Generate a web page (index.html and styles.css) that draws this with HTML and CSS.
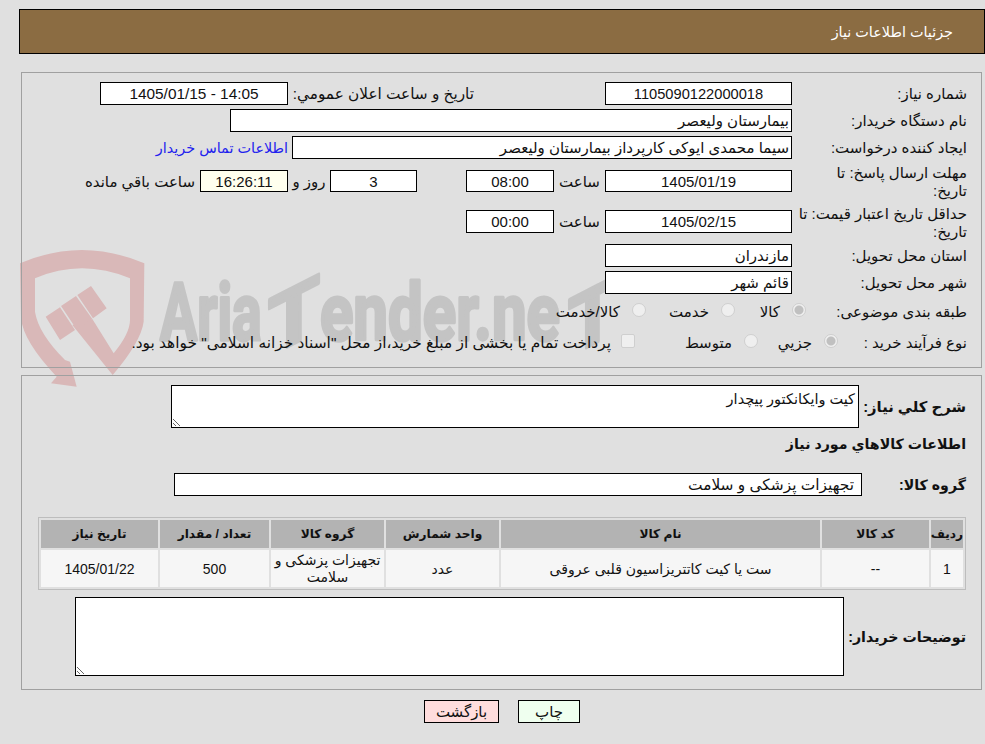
FILE: index.html
```html
<!DOCTYPE html>
<html lang="fa" dir="rtl">
<head>
<meta charset="utf-8">
<title>جزئیات اطلاعات نیاز</title>
<link rel="stylesheet" href="styles.css">
</head>
<body>
<svg class="watermark" viewBox="0 0 1860 450" width="620" height="150" aria-hidden="true">
  <path class="shield" d="M15,55 Q200,-25 388,55 L386,230 Q378,290 293,390 L172,240 L232,222 L296,325 Q345,265 345,225 L345,100 Q200,40 60,100 L60,200 Q70,265 150,345 L165,350 L185,425 L108,415 L125,395 Q25,290 18,220 Z"/>
  <path class="shield" d="M92,215 L135,187 L180,255 L135,285 Z M138,183 L183,153 L232,222 L184,252 Z M187,150 L228,123 L275,190 L234,220 Z"/>
  <text class="mark" x="435" y="285" textLength="305" lengthAdjust="spacingAndGlyphs">Aria</text>
  <text class="mark" transform="translate(759 336) skewY(-27)" x="0" y="0" textLength="156" lengthAdjust="spacingAndGlyphs">T</text>
  <text class="mark" x="915" y="285" textLength="720" lengthAdjust="spacingAndGlyphs">ender.ne</text>
  <text class="mark" transform="translate(1659 336) skewY(-27)" x="0" y="0" textLength="147" lengthAdjust="spacingAndGlyphs">T</text>
</svg>

<header class="title-bar">جزئیات اطلاعات نیاز</header>

<section class="panel panel-info">
  <div class="row">
    <label class="lbl">شماره نیاز:</label>
    <input class="fld fld-main ctr serial" readonly value="1105090122000018">
    <span class="announce">تاریخ و ساعت اعلان عمومي:</span>
    <input class="fld w188 ctr stamp" readonly value="1405/01/15 - 14:05" dir="ltr">
  </div>
  <div class="row">
    <label class="lbl">نام دستگاه خریدار:</label>
    <input class="fld w562" readonly value="بیمارستان ولیعصر">
  </div>
  <div class="row">
    <label class="lbl">ایجاد کننده درخواست:</label>
    <input class="fld w500" readonly value="سیما محمدی ایوکی کارپرداز بیمارستان ولیعصر">
    <a class="contact" href="#">اطلاعات تماس خریدار</a>
  </div>
  <div class="row row-deadline">
    <label class="lbl lbl-two">مهلت ارسال پاسخ: تا<br>تاریخ:</label>
    <input class="fld fld-main short ctr" readonly value="1405/01/19">
    <span class="unit w51">ساعت</span>
    <input class="fld w88 short ctr" readonly value="08:00">
    <span class="spacer"></span>
    <input class="fld w87 short ctr" readonly value="3">
    <span class="unit w42">روز و</span>
    <input class="fld w88 short ctr ivory" readonly value="16:26:11">
    <span class="remain">ساعت باقي مانده</span>
  </div>
  <div class="row row-validity">
    <label class="lbl lbl-two">حداقل تاریخ اعتبار قیمت: تا<br>تاریخ:</label>
    <input class="fld fld-main ctr" readonly value="1405/02/15">
    <span class="unit w51">ساعت</span>
    <input class="fld w88 ctr" readonly value="00:00">
  </div>
  <div class="row">
    <label class="lbl">استان محل تحویل:</label>
    <input class="fld fld-main" readonly value="مازندران">
  </div>
  <div class="row">
    <label class="lbl">شهر محل تحویل:</label>
    <input class="fld fld-main" readonly value="قائم شهر">
  </div>
  <div class="row row-options">
    <label class="lbl-cat">طبقه بندی موضوعی:</label>
    <span class="opt w71"><input class="radio" type="radio" disabled checked><span>کالا</span></span>
    <span class="opt w89"><input class="radio" type="radio" disabled><span>خدمت</span></span>
    <span class="opt"><input class="radio" type="radio" disabled><span>کالا/خدمت</span></span>
  </div>
  <div class="row row-process">
    <label class="lbl-proc">نوع فرآیند خرید :</label>
    <span class="opt w80"><input class="radio" type="radio" disabled checked><span>جزیي</span></span>
    <span class="opt w123"><input class="radio" type="radio" disabled><span>متوسط</span></span>
    <span class="opt opt-check"><input class="check" type="checkbox" disabled><span class="treasury">پرداخت تمام یا بخشی از مبلغ خرید،از محل "اسناد خزانه اسلامی" خواهد بود.</span></span>
  </div>
</section>

<section class="panel panel-goods">
  <div class="row-area">
    <label class="lbl-bold lbl-summary">شرح کلي نیاز:</label>
    <textarea class="area area-sm" readonly>کیت وایکانکتور پیچدار</textarea>
  </div>
  <h2 class="goods-title">اطلاعات کالاهاي مورد نیاز</h2>
  <div class="row-group">
    <label class="lbl-bold w104">گروه کالا:</label>
    <div class="group-value">تجهیزات پزشکی و سلامت</div>
  </div>
  <table class="items">
    <colgroup>
      <col class="c1"><col class="c2"><col class="c3"><col class="c4"><col class="c5"><col class="c6"><col class="c7">
    </colgroup>
    <thead>
      <tr><th>ردیف</th><th>کد کالا</th><th>نام کالا</th><th>واحد شمارش</th><th>گروه کالا</th><th>تعداد / مقدار</th><th>تاریخ نیاز</th></tr>
    </thead>
    <tbody>
      <tr><td>1</td><td>--</td><td>ست یا کیت کاتتریزاسیون قلبی عروقی</td><td>عدد</td><td class="tight">تجهیزات پزشکی و سلامت</td><td>500</td><td>1405/01/22</td></tr>
    </tbody>
  </table>
  <div class="row-notes">
    <label class="lbl-bold lbl-notes">توضیحات خریدار:</label>
    <textarea class="area area-lg" readonly></textarea>
  </div>
</section>

<div class="actions">
  <button class="btn btn-print" type="button">چاپ</button>
  <button class="btn btn-back" type="button">بازگشت</button>
</div>
</body>
</html>
```
FILE: styles.css
```css
* { box-sizing: border-box; }
html { background: #e0e0e0; }
body {
  margin: 0;
  height: 744px;
  overflow: hidden;
  font: 15px/18px "Liberation Sans", "DejaVu Sans", sans-serif;
  color: #111;
  position: relative;
}
.watermark { position: absolute; left: 15px; top: 245px; z-index: -1; direction: ltr; }
.shield { fill: #d9b8b8; }
.mark {
  font: 700 240px "Roboto", sans-serif;
  fill: #c4c4c4;
  stroke: #c4c4c4;
  stroke-width: 10px;
  stroke-linejoin: round;
  direction: ltr;
}

.title-bar {
  margin: 9px 0 0 auto;
  width: 966px;
  height: 45px;
  border: 1px solid #000;
  background: #8b6c42;
  color: #fff;
  font-size: 14.4px;
  padding: 13px 31px 0 0;
}
.panel {
  margin-right: 3px;
  width: 961px;
  border: 1px solid #a0a0a0;
  padding-right: 14px;
}
.panel-info { margin-top: 18px; height: 296px; padding-top: 9px; }
.panel-goods { margin-top: 7px; height: 315px; padding-top: 9px; padding-right: 15px; }

.row { display: flex; align-items: center; height: 23px; margin-bottom: 4px; }
.row-deadline { height: 36px; }
.row-validity { height: 37px; }
.row-options { height: 28px; margin: 2px 0; }
.row-process { height: 30px; margin: 0; }
.lbl { width: 175px; padding-left: 4px; flex: none; }
.lbl-two { padding-top: 2px; }
.lbl-cat { width: 161px; flex: none; white-space: nowrap; }
.lbl-proc { width: 129px; flex: none; white-space: nowrap; }

.fld {
  height: 23px;
  border: 1px solid #000;
  background: #fff;
  padding: 0 2px;
  font: inherit;
  color: #111;
  flex: none;
  outline: none;
}
.short { height: 22px; }
.ctr { text-align: center; }
.serial { font-size: 14.67px; }
.stamp { font-size: 15.4px; }
.ivory { background: #ffffee; }
.fld-main { width: 187px; }
.w188 { width: 188px; }
.w562 { width: 562px; }
.w500 { width: 500px; }
.w88 { width: 88px; }
.w87 { width: 87px; }
.announce { width: 317px; padding-right: 131px; flex: none; font-size: 15.3px; white-space: nowrap; }
.contact { margin-right: 4px; color: #2222ee; text-decoration: none; font-size: 14.4px; }
.unit { text-align: center; flex: none; padding-top: 1px; }
.w51 { width: 51px; }
.w42 { width: 42px; }
.spacer { width: 49px; flex: none; }
.remain { margin-right: 5px; white-space: nowrap; padding-top: 1px; }

.opt { display: flex; align-items: center; flex: none; }
.w71 { width: 71px; }
.w89 { width: 89px; }
.w80 { width: 80px; }
.w123 { width: 123px; }
.radio, .check {
  appearance: none;
  width: 14px;
  height: 14px;
  margin: 0 0 4px 12px;
  border: 1px solid #cfcfcf;
  background: #efefef;
  flex: none;
}
.radio { border-radius: 50%; }
.radio:checked { background: radial-gradient(circle, #c0c0c0 0 4px, #efefef 5px); }
.check { border-radius: 2px; margin-left: 10px; }
.treasury { font-size: 15.4px; white-space: nowrap; }

.row-area { display: flex; }
.lbl-bold { font-weight: 700; font-size: 14.2px; flex: none; white-space: nowrap; }
.lbl-summary { width: 107px; align-self: center; font-size: 14.8px; }
.w104 { width: 104px; }
.area {
  display: block;
  border: 1px solid #000;
  background: #fff;
  font: inherit;
  color: #111;
  padding: 3px;
  outline: none;
  flex: none;
}
.area-sm { width: 688px; height: 43px; font-size: 14.5px; padding-top: 4px; }
.area-lg { width: 769px; height: 79px; }
.goods-title { margin: 6px 0 0; height: 30px; font: inherit; font-size: 14.2px; font-weight: 700; padding-top: 1px; }
.row-group { display: flex; align-items: center; margin-top: 9px; height: 23px; }
.group-value {
  width: 688px;
  height: 23px;
  border: 1px solid #000;
  background: #fff;
  font-size: 15.4px;
  padding: 2px 7px 0 0;
  flex: none;
}
.items {
  width: 928px;
  margin: 21px 0 0 0;
  table-layout: fixed;
  border-collapse: separate;
  border-spacing: 2px;
  border: 1px solid #bdbdbd;
}
.c1 { width: 32px; }
.c2 { width: 107px; }
.c3 { width: 319px; }
.c4 { width: 113px; }
.c5 { width: 113px; }
.c6 { width: 109px; }
.c7 { width: 117px; }
.items th {
  height: 28px;
  padding: 0 0 1px;
  background: #b3b3b3;
  font-size: 12.2px;
  font-weight: 700;
}
.items td {
  height: 37px;
  padding: 2px 0 0;
  background: #f6f6f6;
  text-align: center;
  font-size: 14px;
  line-height: 17px;
}
.items td.tight { padding: 0; }
.row-notes { display: flex; align-items: center; margin-top: 7px; }
.lbl-notes { width: 122px; }

.actions { display: flex; margin: 10px 405px 0 0; gap: 19px; }
.btn {
  height: 23px;
  border: 1px solid #000;
  font: inherit;
  color: #111;
  padding: 0;
}
.btn-print { width: 62px; background: #efffef; }
.btn-back { width: 75px; background: #ffdddd; }
```
